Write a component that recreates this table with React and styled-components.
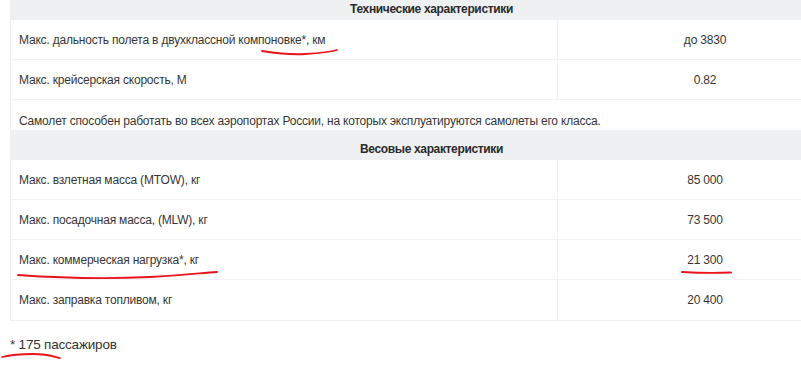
import React from "react";
import styled, { createGlobalStyle } from "styled-components";

const Global = createGlobalStyle`
  html, body { margin: 0; padding: 0; background: #fff; }
  body { font-family: "Liberation Sans", Arial, sans-serif; color: #333; overflow: hidden; }
`;

const Page = styled.div`
  position: relative;
  width: 801px;
  height: 366px;
  overflow: hidden;
`;

const Content = styled.div`
  margin-top: -10px;
  padding-left: 10px;
`;

const Table = styled.div`
  width: 843px;
  border-left: 1px solid #eef0f1;
  border-right: 1px solid #eef0f1;
  border-bottom: 1px solid #eef0f1;
  box-sizing: border-box;
  font-size: 12px;
  line-height: 14px;
  letter-spacing: -0.2px;
  color: #363636;
`;

const HeaderRow = styled.div`
  height: 30px;
  box-sizing: border-box;
  background: #eef0f2;
  padding: 12px 8px 4px;
  text-align: center;
  font-weight: bold;
  letter-spacing: -0.35px;
  color: #2b2b2b;
`;

const Row = styled.div`
  display: grid;
  grid-template-columns: 546px 1fr;
  height: 40px;
  box-sizing: border-box;
  border-bottom: ${(p) => (p.$last ? "0" : "1px solid #f1f2f3")};
`;

const LabelCell = styled.div`
  display: flex;
  align-items: center;
  padding: 0 8px;
`;

const ValueCell = styled.div`
  display: flex;
  align-items: center;
  justify-content: center;
  border-left: 1px solid #f1f2f3;
`;

const NoteRow = styled.div`
  height: 30px;
  box-sizing: border-box;
  padding: 14px 8px 2px;
`;

const Footnote = styled.div`
  margin-top: 15px;
  font-size: 13.5px;
  line-height: 18px;
  letter-spacing: -0.2px;
  color: #333;
`;

const Marks = styled.svg`
  position: absolute;
  top: 0;
  left: 0;
  pointer-events: none;
`;

const tech = [
  ["Макс. дальность полета в двухклассной компоновке*, км", "до 3830"],
  ["Макс. крейсерская скорость, М", "0.82"],
];

const weight = [
  ["Макс. взлетная масса (MTOW), кг", "85 000"],
  ["Макс. посадочная масса, (MLW), кг", "73 500"],
  ["Макс. коммерческая нагрузка*, кг", "21 300"],
  ["Макс. заправка топливом, кг", "20 400"],
];

export default function App() {
  return (
    <Page>
      <Global />
      <Content>
        <Table>
          <HeaderRow>Технические характеристики</HeaderRow>
          {tech.map(([l, v]) => (
            <Row key={l}>
              <LabelCell>{l}</LabelCell>
              <ValueCell>{v}</ValueCell>
            </Row>
          ))}
          <NoteRow>
            Самолет способен работать во всех аэропортах России, на которых эксплуатируются самолеты его класса.
          </NoteRow>
          <HeaderRow>Весовые характеристики</HeaderRow>
          {weight.map(([l, v], i) => (
            <Row key={l} $last={i === weight.length - 1}>
              <LabelCell>{l}</LabelCell>
              <ValueCell>{v}</ValueCell>
            </Row>
          ))}
        </Table>
        <Footnote>* 175 пассажиров</Footnote>
      </Content>
      <Marks width="801" height="366" viewBox="0 0 801 366">
        <g fill="none" stroke="#e8141a" strokeWidth="1.8" strokeLinecap="round">
          <path d="M262 51 C275 53, 290 55, 305 54 S330 52, 337 50" />
          <path d="M18 275 C60 278, 110 279, 150 277 S200 273, 217 272" />
          <path d="M682 272 C700 273, 718 273, 731 272.5" />
          <path d="M2 357 C10 355, 20 354, 33 354 S52 356, 60 358" />
        </g>
      </Marks>
    </Page>
  );
}
